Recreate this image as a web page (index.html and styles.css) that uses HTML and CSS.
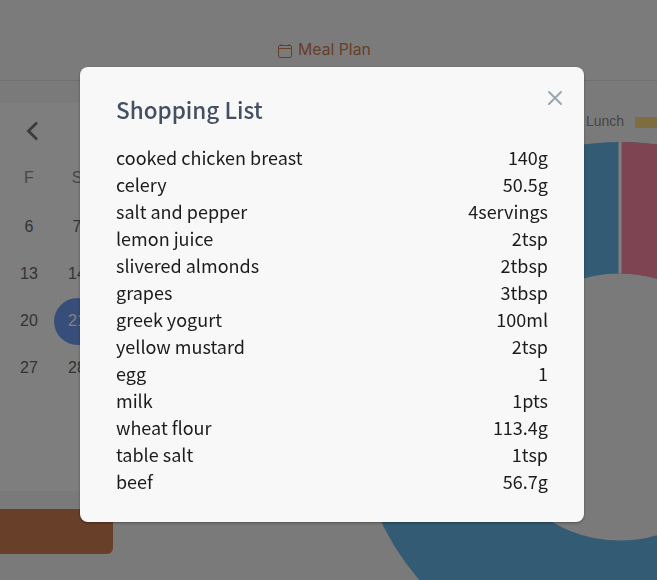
FILE: index.html
```html
<!DOCTYPE html>
<html lang="en">
<head>
<meta charset="utf-8">
<title>Meal Plan</title>
<link rel="stylesheet" href="styles.css">
</head>
<body>
<div class="page">
  <header class="topbar">
    <svg class="tab-icon" width="16" height="16" viewBox="0 0 16 16" fill="none" stroke="currentColor"><rect x="1.5" y="2.5" width="13" height="12" rx="1.5"/><path d="M1.5 5.5h13M4 1v1.5M12 1v1.5"/></svg>
    <span>Meal Plan</span>
  </header>
  <main class="content">
    <section class="left">
      <div class="calendar">
        <div class="calendar-nav">
          <svg width="14" height="20" viewBox="0 0 14 20" fill="none" stroke="currentColor" stroke-width="2.8"><path d="M11 1.5 2.5 10l8.500 8.500"/></svg>
        </div>
        <div class="days">
          <span class="weekday">F</span><span class="weekday">S</span>
          <span>6</span><span>7</span>
          <span>13</span><span>14</span>
          <span>20</span><span class="selected">21</span>
          <span>27</span><span>28</span>
        </div>
      </div>
      <div class="action"></div>
    </section>
    <section class="chart">
      <div class="legend"><span>Lunch</span><i class="swatch"></i></div>
      <svg class="doughnut" width="532" height="532" viewBox="-266 -266 532 532">
        <circle class="blue" r="199.250"/>
        <path class="pink" d="M0-265A265 265 0 0 1 265 0H133.500A133.500 133.500 0 0 0 0-133.500Z"/>
        <path class="divider" d="M0-265V-133.500M133.500 0H265"/>
      </svg>
    </section>
  </main>
</div>
<div class="overlay">
  <section class="modal" role="dialog" aria-label="Shopping List">
    <div class="modal-head">
      <h1>Shopping List</h1>
      <button class="close" aria-label="Close"><svg width="16" height="16" viewBox="0 0 16 16" fill="none" stroke="currentColor" stroke-width="2" stroke-linecap="round"><path d="m2 2 12 12M14 2 2 14"/></svg></button>
    </div>
    <ul class="items">
      <li><span>cooked chicken breast</span><span>140g</span></li>
      <li><span>celery</span><span>50.5g</span></li>
      <li><span>salt and pepper</span><span>4servings</span></li>
      <li><span>lemon juice</span><span>2tsp</span></li>
      <li><span>slivered almonds</span><span>2tbsp</span></li>
      <li><span>grapes</span><span>3tbsp</span></li>
      <li><span>greek yogurt</span><span>100ml</span></li>
      <li><span>yellow mustard</span><span>2tsp</span></li>
      <li><span>egg</span><span>1</span></li>
      <li><span>milk</span><span>1pts</span></li>
      <li><span>wheat flour</span><span>113.4g</span></li>
      <li><span>table salt</span><span>1tsp</span></li>
      <li><span>beef</span><span>56.7g</span></li>
    </ul>
  </section>
</div>
</body>
</html>
```
FILE: styles.css
```css
* { box-sizing: border-box; }
body { margin: 0; overflow: hidden; }
.page {
  height: 580px;
  overflow: hidden;
  background: #f5f5f5;
  font-family: "Liberation Sans", Arial, sans-serif;
}
.topbar {
  height: 81px;
  padding: 40px 0 0 277px;
  display: flex;
  align-items: flex-start;
  gap: 5px;
  background: #f7f7f7;
  border-bottom: 1px solid #e2e2e2;
  color: #d07e50;
  font: 15.800px/20px Inter, sans-serif;
}
.tab-icon { margin-top: 3px; }
.content { display: grid; grid-template-columns: 354px 303px; height: 499px; }
.left { padding-top: 22px; }
.calendar {
  width: 340px;
  height: 388px;
  padding: 18px 0 0 5px;
  background: #fcfcfc;
}
.calendar-nav { height: 33px; padding-left: 21px; color: #777; }
.calendar-nav svg { display: block; }
.days {
  display: grid;
  grid-template-columns: 48px 48px;
  grid-template-rows: 49px repeat(4, 47px);
  place-items: center;
  font-size: 16px;
  color: #686868;
}
.days .weekday { color: #8f8f8f; padding-bottom: 1px; }
.days .selected {
  width: 47px;
  height: 47px;
  margin-top: 2px;
  line-height: 45px;
  text-align: center;
  border-radius: 50%;
  background: #719cf4;
  color: #fff;
}
.action {
  width: 113px;
  height: 45px;
  margin-top: 18px;
  border-radius: 0 6px 6px 0;
  background: #d07e50;
}
.chart { padding-top: 32px; overflow: hidden; }
.legend {
  height: 28px;
  padding-left: 232px;
  display: flex;
  gap: 11px;
  font-size: 14px;
  line-height: 17px;
  color: #8c8c8c;
}
.swatch { width: 46px; height: 11px; margin-top: 4px; flex: none; background: #ffdb7c; }
.doughnut { display: block; margin-top: -0.5px; }
.blue { fill: none; stroke: #68b7e9; stroke-width: 131.5; }
.pink { fill: #fe88a4; }
.divider { stroke: #fff; stroke-width: 3; }
.overlay {
  position: fixed;
  inset: 0;
  padding: 67px 0 0 80px;
  background: rgba(0, 0, 0, .5);
}
.modal {
  width: 504px;
  height: 454.500px;
  padding: 23px 36px;
  border-radius: 8px;
  background: #f8f8f8;
  color: #1c1c1c;
  font-family: "Noto Sans CJK KR", sans-serif;
  box-shadow: 0 1px 3px rgba(0, 0, 0, .35);
}
.modal-head { display: flex; justify-content: space-between; height: 54px; }
h1 { margin: 0; font-size: 22.500px; line-height: 38px; font-weight: 500; color: #434f63; }
.close { margin: 0 -15px 0 0; padding: 0; width: 16px; height: 16px; border: 0; background: none; color: #9ca5b3; }
.close svg { display: block; }
.items { margin: 0; padding: 0; list-style: none; font-size: 18px; line-height: 27px; font-weight: 400; }
.items li { display: flex; justify-content: space-between; height: 27px; }
```
